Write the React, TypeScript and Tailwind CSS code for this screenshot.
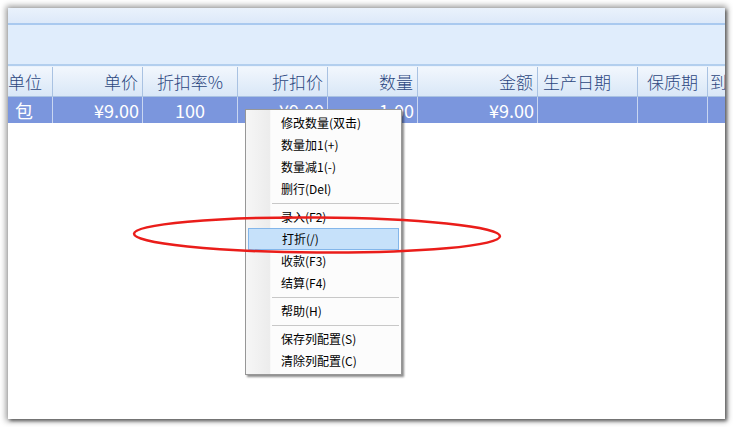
const cols = [
  { w: 'w-[45px]', head: '单位', cell: '包', hAlign: 'justify-start pl-0', cAlign: 'justify-start pl-[7px]' },
  { w: 'w-[90px]', head: '单价', cell: '¥9.00', hAlign: 'justify-end pr-1', cAlign: 'justify-end pr-[3px]' },
  { w: 'w-[95px]', head: '折扣率%', cell: '100', hAlign: 'justify-center', cAlign: 'justify-center' },
  { w: 'w-[90px]', head: '折扣价', cell: '¥9.00', hAlign: 'justify-end pr-1', cAlign: 'justify-end pr-[3px]' },
  { w: 'w-[90px]', head: '数量', cell: '1.00', hAlign: 'justify-end pr-1', cAlign: 'justify-end pr-[3px]' },
  { w: 'w-[120px]', head: '金额', cell: '¥9.00', hAlign: 'justify-end pr-1', cAlign: 'justify-end pr-[3px]' },
  { w: 'w-[100px]', head: '生产日期', cell: '', hAlign: 'justify-start pl-[5px]', cAlign: 'justify-start' },
  { w: 'w-[70px]', head: '保质期', cell: '', hAlign: 'justify-center', cAlign: 'justify-center' },
  { w: 'w-[40px]', head: '到', cell: '', hAlign: 'justify-start pl-[2px]', cAlign: 'justify-start' },
]

type Entry = { label: string; active?: boolean } | 'sep'

const menu: Entry[] = [
  { label: '修改数量(双击)' },
  { label: '数量加1(+)' },
  { label: '数量减1(-)' },
  { label: '删行(Del)' },
  'sep',
  { label: '录入(F2)' },
  { label: '打折(/)', active: true },
  { label: '收款(F3)' },
  { label: '结算(F4)' },
  'sep',
  { label: '帮助(H)' },
  'sep',
  { label: '保存列配置(S)' },
  { label: '清除列配置(C)' },
]

export default function App() {
  return (
    <div className="w-[733px] h-[427px] bg-white overflow-hidden relative pt-2 pl-2 font-['Noto_Sans_CJK_SC','Noto_Sans',sans-serif]">
      <div className="w-[717px] h-[411px] bg-white overflow-hidden shadow-[0_0_6px_2px_rgba(0,0,0,0.4),2px_2px_3px_rgba(0,0,0,0.45)] flex flex-col">
        {/* toolbar bands */}
        <div className="h-[15px] bg-gradient-to-b from-[#eaf2fc] to-[#dde9f9]" />
        <div className="h-[2px] bg-[#a9c9ef]" />
        <div className="h-[39px] bg-[#e0edfc]" />
        <div className="h-[2px] bg-[#b3cfee]" />
        <div className="h-[1px] bg-[#eaf2fc]" />

        {/* header */}
        <div className="flex h-[30px] bg-gradient-to-b from-[#f2f7fd] to-[#d9e7f7] border-b border-[#a9c2e2] text-[#2b4680] text-[17px] leading-none font-light">
          {cols.map((c) => (
            <div key={c.head} className={`${c.w} shrink-0 flex items-center border-r border-[#a9c2e2] whitespace-nowrap overflow-hidden ${c.hAlign}`}>
              {c.head}
            </div>
          ))}
        </div>

        {/* data row */}
        <div className="flex h-[26px] bg-[#7b96dd] text-white text-[18px] leading-none">
          {cols.map((c) => (
            <div key={c.head} className={`${c.w} shrink-0 flex items-center border-r border-[#c9d6f1] whitespace-nowrap overflow-hidden ${c.cAlign}`}>
              {c.cell}
            </div>
          ))}
        </div>
        <div className="flex-1 bg-white" />
      </div>

      {/* context menu */}
      <div className="absolute left-[245px] top-[109px] w-[157px] bg-[#fcfcfc] border border-[#979797] shadow-[2px_2px_2px_rgba(0,0,0,0.45)] py-[2px] px-[2px] text-[12px] text-black">
        <div className="absolute left-0 top-0 bottom-0 w-[25px] bg-gradient-to-r from-[#f6f6f6] to-[#ececec] border-r border-[#f8f8f8]" />
        {menu.map((m, i) =>
          m === 'sep' ? (
            <div key={i} className="relative h-[6px] flex items-center pl-[24px]">
              <div className="h-px w-full bg-[#c8c8c8]" />
            </div>
          ) : (
            <div
              key={i}
              className={`relative h-[22px] flex items-center pl-[33px] leading-none ${
                m.active ? 'bg-[#c6e1fa] border border-[#83b6ea] pl-[32px]' : ''
              }`}
            >
              {m.label}
            </div>
          ),
        )}
      </div>

      {/* red annotation ellipse */}
      <svg className="absolute left-0 top-0 pointer-events-none" width="733" height="427">
        <ellipse cx="317" cy="235" rx="183" ry="17.5" fill="none" stroke="#ea1d1a" strokeWidth="2.5" transform="rotate(0.4 317 235)" />
      </svg>
    </div>
  )
}
